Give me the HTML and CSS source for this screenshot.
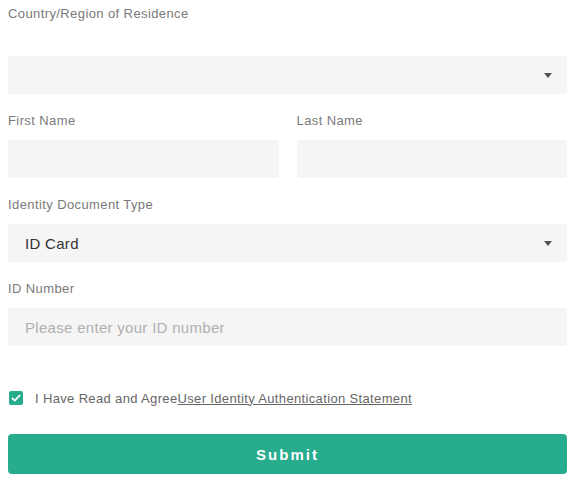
FILE: index.html
```html
<!DOCTYPE html>
<html lang="en">
<head>
    <meta charset="UTF-8">
    <meta name="viewport" content="width=device-width, initial-scale=1.0">
    <title>Identity Authentication</title>
    <link rel="stylesheet" href="styles.css">
</head>
<body>
    <form class="auth-form">
        <div class="field field-first">
            <label class="field-label">Country/Region of Residence</label>
            <div class="select-box">
                <span class="select-value"></span>
                <span class="select-arrow"></span>
            </div>
        </div>

        <div class="name-row">
            <div class="field">
                <label class="field-label">First Name</label>
                <input class="text-input" type="text">
            </div>
            <div class="field">
                <label class="field-label">Last Name</label>
                <input class="text-input" type="text">
            </div>
        </div>

        <div class="field">
            <label class="field-label">Identity Document Type</label>
            <div class="select-box">
                <span class="select-value">ID Card</span>
                <span class="select-arrow"></span>
            </div>
        </div>

        <div class="field">
            <label class="field-label">ID Number</label>
            <input class="text-input" type="text" placeholder="Please enter your ID number">
        </div>

        <div class="agree">
            <span class="checkbox">
                <svg width="10" height="8" viewBox="0 0 10 8">
                    <path d="M1 4 L3.8 6.6 L9 1.2" fill="none" stroke="#fff" stroke-width="1.8"/>
                </svg>
            </span>
            <span class="agree-text">I Have Read and Agree<a href="#" class="agree-link">User Identity Authentication Statement</a></span>
        </div>

        <button type="button" class="submit-btn">Submit</button>
    </form>
</body>
</html>
```

FILE: styles.css
```css
body {
    margin: 0;
    padding: 5px 6px 0 8px;
    font-family: "Liberation Sans", Arial, sans-serif;
    background: #fff;
}
.field {
    display: flex;
    flex-direction: column;
    margin-bottom: 18px;
}
.field-label {
    font-size: 13px;
    line-height: 18px;
    letter-spacing: 0.4px;
    color: #7a7a7a;
    margin-bottom: 10px;
}
.field-first .field-label {
    margin-bottom: 33px;
}
.name-row {
    display: grid;
    grid-template-columns: 1fr 1fr;
    gap: 18px;
}
.select-box,
.text-input {
    height: 38px;
    background: #f5f5f5;
    border: none;
    border-radius: 2px;
    box-sizing: border-box;
    padding: 0 17px;
    font-family: inherit;
    font-size: 15px;
    letter-spacing: 0.3px;
    color: #333;
    outline: none;
}
.select-box {
    display: flex;
    align-items: center;
    justify-content: space-between;
    padding-right: 15px;
}
.text-input::placeholder {
    color: #b0b0b0;
}
.select-arrow {
    width: 0;
    height: 0;
    border-left: 4.5px solid transparent;
    border-right: 4.5px solid transparent;
    border-top: 5px solid #555;
}
.agree {
    display: flex;
    align-items: center;
    height: 20px;
    margin-top: 42px;
    padding-left: 1px;
}
.checkbox {
    width: 14px;
    height: 14px;
    border-radius: 2px;
    background: #27ad8e;
    display: flex;
    align-items: center;
    justify-content: center;
    margin-right: 12px;
}
.agree-text {
    font-size: 13px;
    letter-spacing: 0.35px;
    color: #666;
}
.agree-link {
    color: #666;
    text-decoration: underline;
}
.submit-btn {
    display: block;
    width: 100%;
    height: 40px;
    margin-top: 26px;
    background: #27ad8e;
    color: #fff;
    border: none;
    border-radius: 4px;
    font-family: inherit;
    font-size: 15px;
    font-weight: bold;
    letter-spacing: 2px;
    cursor: pointer;
}
```
